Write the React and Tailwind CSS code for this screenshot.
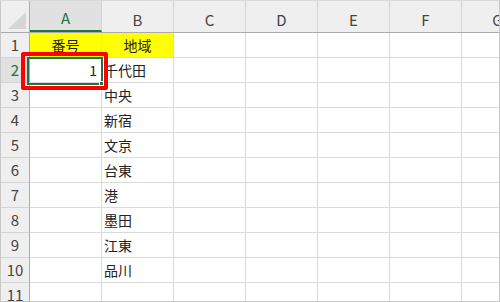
import React from 'react';

const cols = ['A', 'B', 'C', 'D', 'E', 'F', 'G'];
const areas = ['千代田', '中央', '新宿', '文京', '台東', '港', '墨田', '江東', '品川'];

const font = { fontFamily: '"Noto Sans CJK JP", "Noto Sans", sans-serif' };

const Corner = () => (
  <div className="w-[29px] shrink-0 h-full bg-[#efefef] border-r border-[#ababab] flex items-end justify-end pb-[3px] pr-[3px]">
    <svg width="18" height="17" viewBox="0 0 18 17">
      <polygon points="18,0 18,17 0,17" fill="#d6d6d6" />
    </svg>
  </div>
);

const HeaderRow = () => (
  <div className="flex h-[32px] border-b border-[#ababab] bg-[#efefef]">
    <Corner />
    {cols.map((c) => (
      <div
        key={c}
        className={
          c === 'A'
            ? 'w-[72px] shrink-0 flex items-center justify-center pt-[6px] border-r border-[#d4d4d4] bg-[#e1e1e1] text-[#217346] border-b-2 border-b-[#217346] text-[15px]'
            : 'w-[72px] shrink-0 flex items-center justify-center pt-[8px] border-r border-[#d4d4d4] text-[#444] text-[15px]'
        }
      >
        {c}
      </div>
    ))}
  </div>
);

const Row = ({ n, a, b, yellow, selected }) => (
  <div className="flex h-[25px] shrink-0">
    <div
      className={
        selected
          ? 'w-[29px] shrink-0 flex items-center justify-center bg-[#e1e1e1] text-[#217346] border-r border-[#ababab] border-b border-b-[#d4d4d4] text-[15px]'
          : 'w-[29px] shrink-0 flex items-center justify-center bg-[#efefef] text-[#444] border-r border-[#ababab] border-b border-b-[#d4d4d4] text-[15px]'
      }
    >
      {n}
    </div>
    {cols.map((c, i) => {
      let content = null;
      let cls = 'w-[72px] shrink-0 border-r border-b border-[#dadada] flex items-center text-[14px] text-[#222] px-[2px]';
      if (i === 0 && a) {
        content = a;
        cls += yellow ? ' justify-center' : ' justify-end pr-[4px]';
      }
      if (i === 1 && b) {
        content = b;
        cls += yellow ? ' justify-center' : '';
      }
      if (yellow && i < 2) cls += ' bg-[#ffff00]';
      return (
        <div key={c} className={cls}>
          {content}
        </div>
      );
    })}
  </div>
);

export default function App() {
  return (
    <div className="w-[500px] h-[302px] bg-white" style={font}>
      <div className="relative w-[500px] h-[302px] overflow-hidden border border-[#c8c8c8] border-t-[#d8d8d8]">
        <HeaderRow />
        <Row n={1} a="番号" b="地域" yellow />
        <Row n={2} a="1" b={areas[0]} selected />
        {areas.slice(1).map((b, i) => (
          <Row key={b} n={i + 3} b={b} />
        ))}
        <Row n={11} />

        {/* active cell */}
        <div className="absolute left-[26px] top-[56px] w-[76px] h-[28px] border-2 border-[#217346]">
          <div className="absolute right-[-3px] bottom-[-3px] w-[5px] h-[5px] bg-[#217346] border border-white" />
        </div>
        {/* red highlight */}
        <div className="absolute left-[20px] top-[51px] w-[87px] h-[38px] border-[4px] border-[#ff0000] rounded-[2px]" />
      </div>
    </div>
  );
}
